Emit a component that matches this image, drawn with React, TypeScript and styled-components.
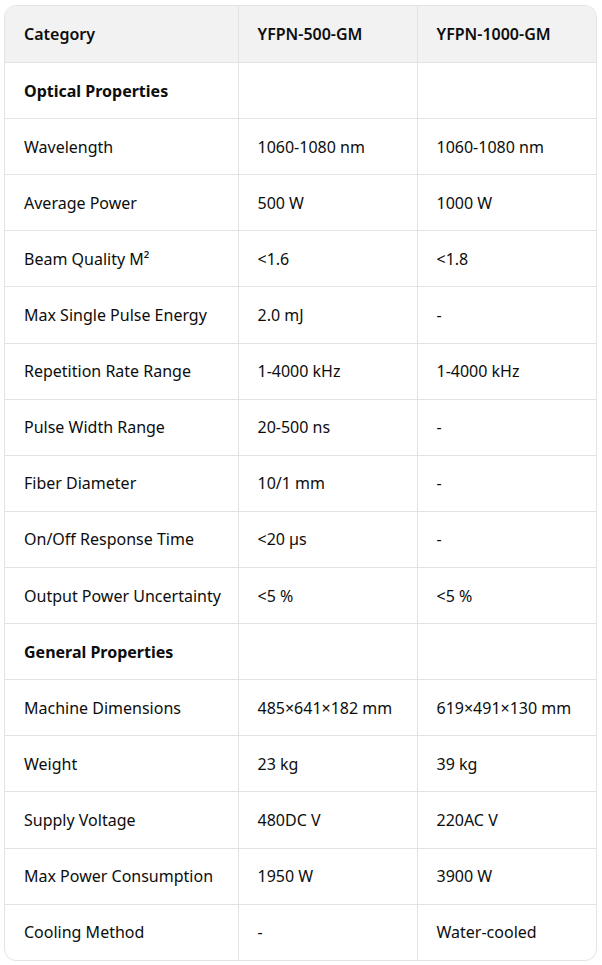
import React from 'react';
import styled, { createGlobalStyle } from 'styled-components';

const GlobalStyle = createGlobalStyle`
    body {
        margin: 0;
        background: #ffffff;
        font-family: "Segoe UI", "Noto Sans", "Open Sans", sans-serif;
        color: #0d0d0d;
    }
`

const Wrapper = styled.div`
    padding: 5px 5px 0 4px;
`

const Frame = styled.div`
    border: 1px solid #e3e3e3;
    border-radius: 12px;
    overflow: hidden;
    width: 591px;
`

const Table = styled.table`
    width: 100%;
    border-collapse: collapse;
    table-layout: fixed;
    font-size: 16px;
`

const HeadCell = styled.th`
    background: #f2f2f2;
    text-align: left;
    font-weight: 600;
    height: 56px;
    padding: 0 19px;
    border-bottom: 1px solid #e3e3e3;
    border-left: 1px solid #e3e3e3;
    &:first-child { border-left: none; }
`

const Cell = styled.td<{ $bold?: boolean }>`
    height: 55.12px;
    padding: 0 19px;
    font-weight: ${({ $bold }) => ($bold ? 700 : 400)};
    border-bottom: 1px solid #e3e3e3;
    border-left: 1px solid #e3e3e3;
    white-space: nowrap;
    &:first-child { border-left: none; }
    tr:last-child > & { border-bottom: none; }
`

type Row = [string, string, string, boolean?];

const rows: Row[] = [
    ['Optical Properties', '', '', true],
    ['Wavelength', '1060-1080 nm', '1060-1080 nm'],
    ['Average Power', '500 W', '1000 W'],
    ['Beam Quality M²', '<1.6', '<1.8'],
    ['Max Single Pulse Energy', '2.0 mJ', '-'],
    ['Repetition Rate Range', '1-4000 kHz', '1-4000 kHz'],
    ['Pulse Width Range', '20-500 ns', '-'],
    ['Fiber Diameter', '10/1 mm', '-'],
    ['On/Off Response Time', '<20 µs', '-'],
    ['Output Power Uncertainty', '<5 %', '<5 %'],
    ['General Properties', '', '', true],
    ['Machine Dimensions', '485×641×182 mm', '619×491×130 mm'],
    ['Weight', '23 kg', '39 kg'],
    ['Supply Voltage', '480DC V', '220AC V'],
    ['Max Power Consumption', '1950 W', '3900 W'],
    ['Cooling Method', '-', 'Water-cooled'],
];

const App = () => (
    <Wrapper>
        <GlobalStyle />
        <Frame>
            <Table>
                <colgroup>
                    <col style={{ width: 233 }} />
                    <col style={{ width: 179 }} />
                    <col style={{ width: 179 }} />
                </colgroup>
                <thead>
                    <tr>
                        <HeadCell>Category</HeadCell>
                        <HeadCell>YFPN-500-GM</HeadCell>
                        <HeadCell>YFPN-1000-GM</HeadCell>
                    </tr>
                </thead>
                <tbody>
                    {rows.map(([name, a, b, bold]) => (
                        <tr key={name}>
                            <Cell $bold={bold}>{name}</Cell>
                            <Cell>{a}</Cell>
                            <Cell>{b}</Cell>
                        </tr>
                    ))}
                </tbody>
            </Table>
        </Frame>
    </Wrapper>
);

export default App;
